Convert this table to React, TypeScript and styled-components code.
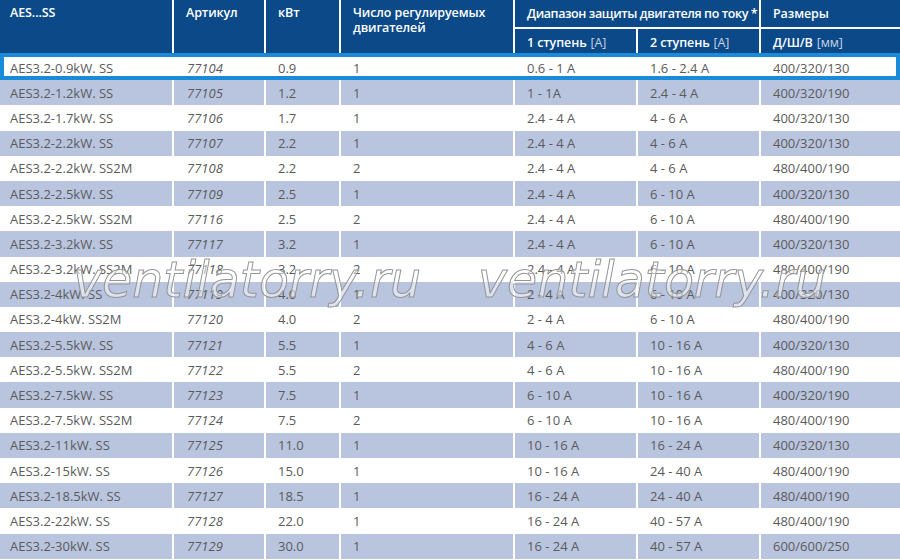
import React from 'react';
import styled, { createGlobalStyle } from 'styled-components';

const GlobalStyle = createGlobalStyle`
    body {
        margin: 0;
        background: #ffffff;
    }
`;

const COLUMNS = '172px 90px 73px 172px 121px 121px 139px';

const Page = styled.div`
    position: relative;
    width: 900px;
    height: 560px;
    overflow: hidden;
    font-family: 'Open Sans', 'Liberation Sans', sans-serif;
`;

const Header = styled.div`
    display: grid;
    grid-template-columns: ${COLUMNS};
    grid-template-rows: 27px 26px;
    column-gap: 2px;
    row-gap: 2px;
    background: #ffffff;
`;

const HeadCell = styled.div<{ $col: string; $row: string; $center?: boolean; $tight?: boolean }>`
    grid-column: ${(p) => p.$col};
    grid-row: ${(p) => p.$row};
    background: #0b4988;
    color: #ffffff;
    font-size: 12.5px;
    font-weight: 600;
    line-height: 15px;
    letter-spacing: ${(p) => (p.$tight ? '-0.4px' : '-0.1px')};
    white-space: nowrap;
    padding: ${(p) => (p.$center ? '0 0 0 12px' : '5px 0 0 12px')};
    display: flex;
    align-items: ${(p) => (p.$center ? 'center' : 'flex-start')};
    &:first-child {
        padding-left: 10px;
    }
`;

const Unit = styled.span`
    font-weight: 400;
    color: #c9d4e6;
    margin-left: 4px;
`;

const Row = styled.div<{ $shaded: boolean; $active?: boolean }>`
    position: relative;
    display: grid;
    grid-template-columns: ${COLUMNS};
    column-gap: 2px;
    height: 25.2px;
    background: #ffffff;

    & > div {
        background: ${(p) => (p.$shaded ? '#b9c5df' : '#ffffff')};
    }

    ${(p) =>
        p.$active &&
        `
        &::after {
            content: '';
            position: absolute;
            top: -2px;
            bottom: 0;
            left: 0;
            right: 0;
            border: 4px solid #1a8bd8;
            pointer-events: none;
        }
    `}
`;

const Cell = styled.div<{ $italic?: boolean; $pad?: number }>`
    display: flex;
    align-items: center;
    padding-left: ${(p) => p.$pad ?? 12}px;
    font-size: 13px;
    color: #5b5b5b;
    font-style: ${(p) => (p.$italic ? 'italic' : 'normal')};
    white-space: nowrap;
`;

const Watermark = styled.div<{ $left: number }>`
    position: absolute;
    top: 256px;
    left: ${(p) => p.$left}px;
    font-family: 'DejaVu Sans', sans-serif;
    font-style: italic;
    font-size: 49px;
    line-height: 1;
    color: rgba(255, 255, 255, 0.5);
    -webkit-text-stroke: 1px #959595;
    pointer-events: none;
    white-space: nowrap;
`;

type Item = [string, string, string, string, string, string, string];

const rows: Item[] = [
    ['AES3.2-0.9kW. SS', '77104', '0.9', '1', '0.6 - 1 A', '1.6 - 2.4 A', '400/320/130'],
    ['AES3.2-1.2kW. SS', '77105', '1.2', '1', '1 - 1A', '2.4 - 4 A', '400/320/190'],
    ['AES3.2-1.7kW. SS', '77106', '1.7', '1', '2.4 - 4 A', '4 - 6 A', '400/320/130'],
    ['AES3.2-2.2kW. SS', '77107', '2.2', '1', '2.4 - 4 A', '4 - 6 A', '400/320/130'],
    ['AES3.2-2.2kW. SS2M', '77108', '2.2', '2', '2.4 - 4 A', '4 - 6 A', '480/400/190'],
    ['AES3.2-2.5kW. SS', '77109', '2.5', '1', '2.4 - 4 A', '6 - 10 A', '400/320/130'],
    ['AES3.2-2.5kW. SS2M', '77116', '2.5', '2', '2.4 - 4 A', '6 - 10 A', '480/400/190'],
    ['AES3.2-3.2kW. SS', '77117', '3.2', '1', '2.4 - 4 A', '6 - 10 A', '400/320/130'],
    ['AES3.2-3.2kW. SS2M', '77118', '3.2', '2', '2.4 - 4 A', '6 - 10 A', '480/400/190'],
    ['AES3.2-4kW. SS', '77119', '4.0', '1', '2 - 4 A', '6 - 10 A', '400/320/130'],
    ['AES3.2-4kW. SS2M', '77120', '4.0', '2', '2 - 4 A', '6 - 10 A', '480/400/190'],
    ['AES3.2-5.5kW. SS', '77121', '5.5', '1', '4 - 6 A', '10 - 16 A', '400/320/130'],
    ['AES3.2-5.5kW. SS2M', '77122', '5.5', '2', '4 - 6 A', '10 - 16 A', '480/400/190'],
    ['AES3.2-7.5kW. SS', '77123', '7.5', '1', '6 - 10 A', '10 - 16 A', '400/320/190'],
    ['AES3.2-7.5kW. SS2M', '77124', '7.5', '2', '6 - 10 A', '10 - 16 A', '480/400/190'],
    ['AES3.2-11kW. SS', '77125', '11.0', '1', '10 - 16 A', '16 - 24 A', '400/320/130'],
    ['AES3.2-15kW. SS', '77126', '15.0', '1', '10 - 16 A', '24 - 40 A', '480/400/190'],
    ['AES3.2-18.5kW. SS', '77127', '18.5', '1', '16 - 24 A', '24 - 40 A', '480/400/190'],
    ['AES3.2-22kW. SS', '77128', '22.0', '1', '16 - 24 A', '40 - 57 A', '480/400/190'],
    ['AES3.2-30kW. SS', '77129', '30.0', '1', '16 - 24 A', '40 - 57 A', '600/600/250'],
];

const App = (): React.ReactElement => {
    return (
        <Page>
            <GlobalStyle />
            <Header>
                <HeadCell $col="1" $row="1 / 3">AES...SS</HeadCell>
                <HeadCell $col="2" $row="1 / 3">Артикул</HeadCell>
                <HeadCell $col="3" $row="1 / 3">кВт</HeadCell>
                <HeadCell $col="4" $row="1 / 3">
                    Число регулируемых
                    <br />
                    двигателей
                </HeadCell>
                <HeadCell $col="5 / 7" $row="1" $center $tight>
                    Диапазон защиты двигателя по току *
                </HeadCell>
                <HeadCell $col="7" $row="1" $center>
                    Размеры
                </HeadCell>
                <HeadCell $col="5" $row="2" $center>
                    1 ступень<Unit>[A]</Unit>
                </HeadCell>
                <HeadCell $col="6" $row="2" $center>
                    2 ступень<Unit>[A]</Unit>
                </HeadCell>
                <HeadCell $col="7" $row="2" $center>
                    Д/Ш/В<Unit>[мм]</Unit>
                </HeadCell>
            </Header>
            {rows.map((r, i) => (
                <Row key={r[1]} $shaded={i % 2 === 1} $active={i === 0}>
                    <Cell $pad={10}>{r[0]}</Cell>
                    <Cell $italic $pad={13}>
                        {r[1]}
                    </Cell>
                    <Cell>{r[2]}</Cell>
                    <Cell>{r[3]}</Cell>
                    <Cell>{r[4]}</Cell>
                    <Cell>{r[5]}</Cell>
                    <Cell>{r[6]}</Cell>
                </Row>
            ))}
            <Watermark $left={73}>ventilatorry.ru</Watermark>
            <Watermark $left={478}>ventilatorry.ru</Watermark>
        </Page>
    );
};

export default App;
